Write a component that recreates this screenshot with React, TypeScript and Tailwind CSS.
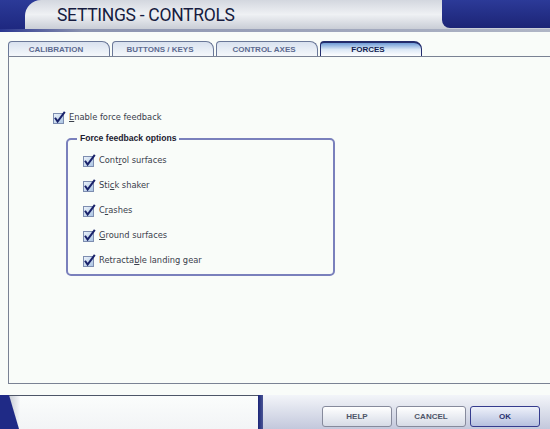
import React from 'react';

const TABS = [
  { label: 'CALIBRATION', active: false },
  { label: 'BUTTONS / KEYS', active: false },
  { label: 'CONTROL AXES', active: false },
  { label: 'FORCES', active: true },
];

// label split around the underlined access key
const OPTIONS: [string, string, string][] = [
  ['Cont', 'r', 'ol surfaces'],
  ['Sti', 'c', 'k shaker'],
  ['C', 'r', 'ashes'],
  ['', 'G', 'round surfaces'],
  ['Retracta', 'b', 'le landing gear'],
];

function CheckMark() {
  return (
    <svg width="13" height="13" viewBox="0 0 13 13" className="shrink-0">
      <defs>
        <linearGradient id="cbfill" x1="0" y1="0" x2="1" y2="1">
          <stop offset="0" stopColor="#eef4fb" />
          <stop offset="1" stopColor="#a9c3e2" />
        </linearGradient>
      </defs>
      <rect x="0.5" y="2.5" width="10" height="10" fill="url(#cbfill)" stroke="#7d8db0" />
      <path d="M2 6.8 L4.6 10.6 L11.8 0.8" fill="none" stroke="#19226a" strokeWidth="2" />
    </svg>
  );
}

function CheckRow({ parts }: { parts: [string, string, string] }) {
  return (
    <div className="flex h-[13px] items-center gap-[3px]">
      <CheckMark />
      <span className="text-[8.3px] leading-[13px] text-[#3a404c] whitespace-nowrap">
        {parts[0]}
        <span className="underline">{parts[1]}</span>
        {parts[2]}
      </span>
    </div>
  );
}

export default function App() {
  return (
    <div className="w-[550px] h-[429px] overflow-hidden bg-[#f9fcf9] flex flex-col font-['DejaVu_Sans',sans-serif]">
      {/* Header */}
      <div className="h-[29px] flex pl-[25px] bg-gradient-to-b from-[#2c3a98] to-[#1e2880]">
        <div className="flex-1 flex rounded-tl-[16px] bg-gradient-to-b from-[#d3d7df] via-[#eff1f4] to-[#c9cdd6]">
          <div className="flex-1 flex items-center pl-[32px] pt-[2px]">
            <span className="font-['Roboto',sans-serif] text-[17.5px] leading-none text-[#161c40] tracking-[-0.3px]">
              SETTINGS - CONTROLS
            </span>
          </div>
          <div className="w-[108px] h-[28px] rounded-bl-[8px] bg-gradient-to-b from-[#2c3a98] to-[#1c2476]" />
        </div>
      </div>
      <div className="h-[3px] bg-[linear-gradient(to_right,#2a3690,#8c94b0_15%,#b0b6c6)]" />

      {/* Tabs */}
      <div className="mt-[9px] flex h-[15px] pl-[8px] gap-[2px]">
        {TABS.map((t) =>
          t.active ? (
            <div
              key={t.label}
              className="w-[102px] h-[15px] rounded-tl-[4px] rounded-tr-[8px] border border-b-0 border-t-2 border-[#232c6c] bg-gradient-to-b from-[#6f9bd6] via-[#dce8f6] to-white flex items-center justify-center"
            >
              <span className="font-['Liberation_Sans',sans-serif] font-bold text-[8px] text-[#121c50] -ml-[6px] pt-[1px]">
                {t.label}
              </span>
            </div>
          ) : (
            <div
              key={t.label}
              className="w-[102px] h-[15px] rounded-tl-[4px] rounded-tr-[8px] border border-b-0 border-[#6a7898] bg-gradient-to-b from-[#d9e2ef] to-[#f5f8fb] flex items-center justify-center"
            >
              <span className="font-['Liberation_Sans',sans-serif] font-bold text-[8px] text-[#5c6a90] -ml-[6px] pt-[1px]">
                {t.label}
              </span>
            </div>
          )
        )}
      </div>

      {/* Panel */}
      <div className="ml-[8px] h-[328px] border-t border-l border-b border-[#7a8294] pt-[54px] pl-[44px]">
        <CheckRow parts={['', 'E', 'nable force feedback']} />

        <div className="relative mt-[14px] ml-[13px] w-[269px] h-[138px] rounded-[5px] border-2 border-[#7a80bc] pt-[14px] pl-[15px] flex flex-col gap-[12px]">
          <span className="absolute -top-[8px] left-[9px] px-[3px] bg-[#f9fcf9] font-['Liberation_Sans',sans-serif] font-bold text-[8.6px] leading-[12px] text-[#1c2030]">
            Force feedback options
          </span>
          {OPTIONS.map((o) => (
            <CheckRow key={o.join('')} parts={o} />
          ))}
        </div>
      </div>

      <div className="h-[11px]" />

      {/* Bottom bar */}
      <div className="h-[34px] flex">
        <div className="w-[258px] flex">
          <svg width="20" height="34" viewBox="0 0 20 34" className="shrink-0">
            <defs>
              <linearGradient id="shade" x1="0" y1="0" x2="1" y2="0">
                <stop offset="0" stopColor="#9ea4b4" />
                <stop offset="1" stopColor="#f6f8fa" />
              </linearGradient>
            </defs>
            <rect x="0" y="0" width="20" height="34" fill="url(#shade)" />
            <rect x="8" y="0" width="12" height="1" fill="#4e5668" />
            <polygon points="0,0 9,0 19,34 0,34" fill="#1f2a86" />
          </svg>
          <div className="flex-1 border-t border-[#4e5668] bg-gradient-to-b from-[#fbfdfc] to-[#f2f4f6]" />
        </div>
        <div className="w-[5px] bg-gradient-to-r from-[#1c2478] to-[#4a5494]" />
        <div className="flex-1 flex justify-end items-start gap-[4px] pr-[10px] pt-[11px] bg-gradient-to-b from-[#f3f5f9] to-[#c3c8dc]">
          {['HELP', 'CANCEL'].map((b) => (
            <div
              key={b}
              className="w-[70px] h-[21px] rounded-[3px] border border-[#868a9c] bg-gradient-to-b from-white to-[#d6dbe6] flex items-center justify-center"
            >
              <span className="font-['Liberation_Sans',sans-serif] font-bold text-[8px] text-[#4e5668]">{b}</span>
            </div>
          ))}
          <div className="w-[70px] h-[21px] rounded-[3px] border border-[#363c8e] bg-gradient-to-b from-[#eef1fa] to-[#b6c0de] flex items-center justify-center">
            <span className="font-['Liberation_Sans',sans-serif] font-bold text-[8px] text-[#2a3270]">OK</span>
          </div>
        </div>
      </div>
    </div>
  );
}
